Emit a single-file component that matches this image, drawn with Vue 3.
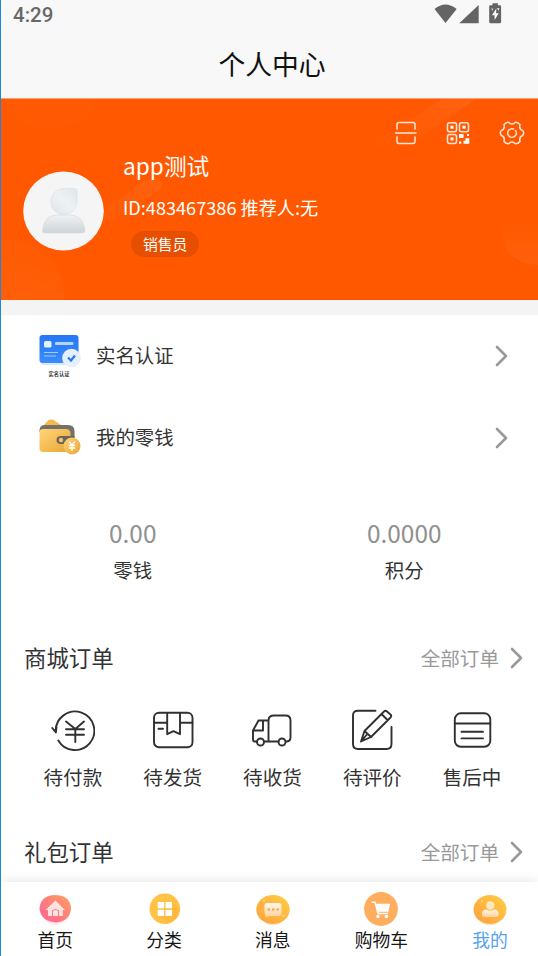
<script setup>
const orders = [
  { label: '待付款', icon: 'pay' },
  { label: '待发货', icon: 'box' },
  { label: '待收货', icon: 'truck' },
  { label: '待评价', icon: 'edit' },
  { label: '售后中', icon: 'after' },
]
const tabs = [
  { label: '首页', icon: 'home' },
  { label: '分类', icon: 'grid' },
  { label: '消息', icon: 'chat' },
  { label: '购物车', icon: 'cart' },
  { label: '我的', icon: 'mine', active: true },
]
</script>

<template>
  <div class="screen">
    <header class="top">
      <div class="status">
        <span class="time">4:29</span>
        <svg class="status-icons" width="70" height="24" viewBox="434 2 70 24" fill="#646464">
          <path d="M434.500 9Q445.500 0 456.700 9L445.500 23Z" />
          <path d="M478.700 5V23.300H459.200Z" />
          <path d="M492.500 3.300h5.400v2h2q1.200 0 1.200 1.200v15.600q0 1.200-1.200 1.200h-9.500q-1.200 0-1.200-1.200V6.500q0-1.200 1.200-1.200h2.100z" />
          <path d="M491.300 8.500h2l-1 2.500zM497 8h2.500l-1.200 3z" fill="#ddd" />
          <path d="M496.300 8.500l-4.300 6.800h2.600v4.700l4.100-6.700h-2.600z" fill="#fff" />
        </svg>
      </div>
      <h1 class="title">个人中心</h1>
    </header>

    <section class="hero">
      <svg class="hero-bg" width="537" height="201" viewBox="1 99 537 201">
        <defs>
          <linearGradient id="beam" x1="1" y1="0" x2="0" y2="1">
            <stop offset="0" stop-color="#fff" stop-opacity=".06" />
            <stop offset="1" stop-color="#fff" stop-opacity="0" />
          </linearGradient>
          <linearGradient id="orb" x1="0" y1="1" x2=".3" y2="0">
            <stop offset="0" stop-color="#fff" stop-opacity=".07" />
            <stop offset="1" stop-color="#fff" stop-opacity=".015" />
          </linearGradient>
          <linearGradient id="fade" x1="0" y1="0" x2="0" y2="1">
            <stop offset=".2" stop-color="#fff" stop-opacity="0" />
            <stop offset="1" stop-color="#fff" stop-opacity=".05" />
          </linearGradient>
        </defs>
        <ellipse cx="50" cy="99" rx="45" ry="29" fill="#fff" fill-opacity=".01" />
        <circle cx="8" cy="296" r="56" fill="url(#orb)" />
        <path d="M444 98H478L420 137L365 150Z" fill="url(#beam)" />
        <path d="M70 237L140 183Q154 176 161 181Q164 188 154 194L85 235Z" fill="url(#beam)" />
        <ellipse cx="538" cy="237" rx="35" ry="28" fill="url(#fade)" />
      </svg>

      <div class="tools">
        <svg width="22" height="24" viewBox="0 0 22 24" fill="none" stroke="#fff" stroke-opacity=".85" stroke-width="1.500" stroke-linecap="round">
          <path d="M2 8V3.500Q2 1.500 4 1.500H18Q20 1.500 20 3.500V8M2 16V20.500Q2 22.500 4 22.500H18Q20 22.500 20 20.500V16M.8 12H21.200" />
        </svg>
        <svg width="24" height="24" viewBox="0 0 24 24" fill="none" stroke="#fff" stroke-opacity=".85" stroke-width="1.500">
          <rect x="1.500" y="1.700" width="9" height="9" rx="2" />
          <rect x="13.500" y="1.700" width="9" height="9" rx="2" />
          <rect x="1.500" y="13.400" width="9" height="9" rx="2" />
          <g fill="#fff" stroke="none">
            <rect x="4.500" y="4.700" width="3" height="3" />
            <rect x="16.500" y="4.700" width="3" height="3" />
            <rect x="4.500" y="16.400" width="3" height="3" />
            <path d="M13 13h4.500v4H13zM21 13h2v2h-2zM13 20.500h2.200v2.300H13zM17.500 22.800v-3h2v-2.500h3.800v5.500z" />
          </g>
        </svg>
        <svg width="26" height="26" viewBox="0 0 26 26" fill="none" stroke="#fff" stroke-opacity=".85" stroke-width="1.500" stroke-linejoin="round">
          <path d="M9.500 2.200Q13 6 16.500 2.200Q19 2 21 4.500Q19.800 9.300 23.600 10.500Q25.800 13 23.600 15.500Q19.800 16.700 21 21.500Q19 24 16.500 23.800Q13 20 9.500 23.800Q7 24 5 21.500Q6.200 16.700 2.400 15.500Q.2 13 2.400 10.500Q6.200 9.300 5 4.500Q7 2 9.500 2.200Z" />
          <path d="M10.300 9.700A4.300 4.300 0 1 0 16.500 10.500M11.500 9A4.300 4.300 0 0 1 14.500 9" stroke-linecap="round" />
        </svg>
      </div>

      <div class="profile">
        <svg class="avatar" width="81" height="80" viewBox="0 0 81 80">
          <defs>
            <linearGradient id="head" x1="1" y1="0" x2="0" y2="1">
              <stop offset="0" stop-color="#dfe7eb" />
              <stop offset=".5" stop-color="#eef2f4" />
              <stop offset="1" stop-color="#dce3e8" />
            </linearGradient>
            <linearGradient id="torso" x1="0" y1="0" x2="0" y2="1">
              <stop offset="0" stop-color="#f0f3f5" />
              <stop offset="1" stop-color="#cdd3d7" />
            </linearGradient>
          </defs>
          <ellipse cx="40.500" cy="40" rx="40.300" ry="39.500" fill="#f5f5f5" />
          <path d="M40 17.500H51Q54 17.500 54 20.500V29A13.200 13 0 1 1 40 17.500Z" fill="url(#head)" stroke="#dae1e5" stroke-width=".7" />
          <path d="M19.500 60Q21 44 34 44H47Q60 44 62 59Q62 62 59 62H22Q19.500 62 19.500 60Z" fill="url(#torso)" stroke="#d7dbde" stroke-width=".7" />
        </svg>
        <div class="info">
          <div class="name">app测试</div>
          <div class="uid">ID:483467386 推荐人:无</div>
          <span class="role">销售员</span>
        </div>
      </div>
    </section>

    <div class="divider"></div>

    <main class="content">
      <div class="row">
        <svg class="row-icon" width="44" height="44" viewBox="0 0 44 44">
          <defs>
            <linearGradient id="card" x1="0" y1="0" x2="0" y2="1">
              <stop offset="0" stop-color="#2577f5" />
              <stop offset="1" stop-color="#3a8bfc" />
            </linearGradient>
          </defs>
          <rect x="2.500" y="3" width="38" height="28" rx="3" fill="#d8e7fc" />
          <rect x="1.500" y="1" width="39" height="28" rx="3" fill="url(#card)" />
          <rect x="6" y="7" width="7.500" height="6.500" rx="1.500" fill="#e5efff" />
          <rect x="17" y="8" width="18.500" height="3" rx="1" fill="#b7d2fc" />
          <path d="M6 18.500H20M6 22H18" stroke="#a5c7fc" stroke-width="1.200" />
          <circle cx="33.500" cy="24" r="9.300" fill="#e5efff" />
          <path d="M30 23.500l3 3 4-5" fill="none" stroke="#287bf0" stroke-width="2.200" />
          <text x="21" y="41.500" class="tiny" text-anchor="middle">实名认证</text>
        </svg>
        <span class="row-label">实名认证</span>
        <svg class="chevron" width="14" height="22" viewBox="0 0 14 22"><path d="M2 2L11 11L2 20" /></svg>
      </div>
      <div class="row">
        <svg class="row-icon" width="44" height="44" viewBox="0 0 44 44">
          <defs>
            <linearGradient id="gold" x1="0" y1="0" x2="1" y2="1">
              <stop offset="0" stop-color="#ffd57a" />
              <stop offset="1" stop-color="#e9a632" />
            </linearGradient>
          </defs>
          <path d="M6 9L10 4.500Q14 2.500 17 5L23 9V13H5Z" fill="#f3ba4b" />
          <path d="M1.500 14Q2 9 7 9H30Q36.500 9 36.500 15V31H29V16H1.500Z" fill="#74706a" />
          <path d="M1.500 15.500Q2 13 5 13H28Q32.500 13 32.500 17.500V32Q32.500 36 28 36H5Q1.500 36 1.500 32Z" fill="url(#gold)" />
          <path d="M36.500 20H23Q18.500 20 18.500 24T23 28H36.500Z" fill="#69655e" />
          <circle cx="23" cy="24" r="2.200" fill="#f2c465" />
          <circle cx="34" cy="30" r="8.500" fill="url(#gold)" />
          <path d="M31 25.500L34 29L37 25.500M34 29V35M30.800 29.500H37.200M30.800 32H37.200" fill="none" stroke="#fff" stroke-width="1.300" />
        </svg>
        <span class="row-label">我的零钱</span>
        <svg class="chevron" width="14" height="22" viewBox="0 0 14 22"><path d="M2 2L11 11L2 20" /></svg>
      </div>

      <div class="stats">
        <div class="stat"><b>0.00</b><span>零钱</span></div>
        <div class="stat"><b>0.0000</b><span>积分</span></div>
      </div>

      <div class="section-head">
        <h2>商城订单</h2>
        <span>全部订单</span>
        <svg class="chevron" width="14" height="22" viewBox="0 0 14 22"><path d="M2 2L11 11L2 20" /></svg>
      </div>

      <div class="orders">
        <div v-for="o in orders" :key="o.icon" class="order">
          <svg width="44" height="44" viewBox="0 0 44 44" fill="none" stroke="#303030" stroke-width="1.900" stroke-linecap="round" stroke-linejoin="round">
            <template v-if="o.icon === 'pay'">
              <path d="M4.700 22A19.300 19.300 0 1 1 7.300 31.500M1.300 19L4.900 23.400L5.500 18.200" />
              <path d="M15 12.500L24.300 20L33 12.500M24.300 20V33M15 20.300H33M15 25.700H33" />
            </template>
            <template v-else-if="o.icon === 'box'">
              <rect x="3" y="3.700" width="38.500" height="34.500" rx="5" />
              <path d="M3 13.700H16M29 13.700H41.500M16.200 4.200V25.200L22.500 22.200L29 25.200V4.200M7.500 19.700H12" />
            </template>
            <template v-else-if="o.icon === 'truck'">
              <path d="M6.500 32.500H4.500Q3 32.500 3 30.500V21.500L8.500 11.500H18.500V32.500H14M8.500 11.500H13V21.500H3M18.500 11.500Q18.500 6.500 24 6.500H35.500Q40.500 6.500 40.500 11.500V28.500Q40.500 32.500 36 32.500M28.500 32.500H18.500" />
              <circle cx="10.500" cy="33" r="3.500" /><circle cx="32" cy="33" r="3.500" />
            </template>
            <template v-else-if="o.icon === 'edit'">
              <path d="M25.500 1.700H8Q3 1.700 3 6.700V35Q3 40 8 40H36.500Q41.500 40 41.500 35V18" />
              <path d="M11 32.500L14.500 22L34 2.500Q35.500 1.200 37 2.500L40.500 5.500Q42 7 40.500 8.500L21 28ZM14.500 22L21 28M31.500 5L37.500 11M11 32.500L16.500 26" />
            </template>
            <template v-else>
              <rect x="4.800" y="4.300" width="35.500" height="33.500" rx="6" />
              <path d="M4.800 14.500H40.300M11.500 22.700H33M11.500 29.400H33" />
            </template>
          </svg>
          <span>{{ o.label }}</span>
        </div>
      </div>

      <div class="section-head">
        <h2>礼包订单</h2>
        <span>全部订单</span>
        <svg class="chevron" width="14" height="22" viewBox="0 0 14 22"><path d="M2 2L11 11L2 20" /></svg>
      </div>
    </main>

    <nav class="tabbar">
      <div v-for="t in tabs" :key="t.icon" class="tab" :class="{ active: t.active }">
        <svg width="36" height="36" viewBox="0 0 36 36">
          <defs>
            <linearGradient id="pink" x1="1" y1="0" x2="0" y2="1">
              <stop offset="0" stop-color="#ffa05f" /><stop offset="1" stop-color="#ff5e98" />
            </linearGradient>
            <linearGradient id="yellow" x1="1" y1="0" x2="0" y2="1">
              <stop offset="0" stop-color="#ffcf44" /><stop offset="1" stop-color="#ff9f3d" />
            </linearGradient>
            <linearGradient id="white" x1="0" y1="0" x2="0" y2="1">
              <stop offset="0" stop-color="#fff7ec" /><stop offset="1" stop-color="#ffd29a" />
            </linearGradient>
          </defs>
          <template v-if="t.icon === 'home'">
            <ellipse cx="18.300" cy="20.500" rx="13" ry="13.500" fill="#ffb9c9" opacity=".35" />
            <path d="M2.500 18Q3 5 17 4Q33 4 34 17Q33.500 30 19 31.500Q4 30 2.500 18Z" fill="url(#pink)" />
            <path d="M8.500 19L18.500 9.500L28 19H25.800V25H11V19Z" fill="#ffe3df" />
            <path d="M15.500 25V20Q18.500 17 21.500 20V25" fill="none" stroke="#f77f8d" stroke-width="1.100" />
            <circle cx="10" cy="9.500" r="1" fill="#f18067" />
          </template>
          <template v-else-if="t.icon === 'grid'">
            <circle cx="18.800" cy="17.700" r="15.300" fill="#ffc247" />
            <path d="M25.500 11L32.500 18Q33 28 21.500 32.500L12.500 24Z" fill="#ffb335" opacity=".6" />
            <g fill="#fff"><rect x="11.700" y="11" width="6.500" height="6.300" rx=".5" /><rect x="19.500" y="11" width="6.500" height="6.300" rx=".5" /><rect x="11.700" y="18.700" width="6.500" height="6.300" rx=".5" /><rect x="19.500" y="18.700" width="6.500" height="6.300" rx=".5" /></g>
          </template>
          <template v-else-if="t.icon === 'chat'">
            <ellipse cx="18" cy="21.500" rx="13" ry="13" fill="#ffd3a0" opacity=".45" />
            <ellipse cx="18" cy="18.500" rx="16.700" ry="14.500" fill="url(#yellow)" />
            <path d="M12 12H24Q26.500 12 26.500 15V22Q26.500 25 24 25H14L11 26.500L10 24Q9.500 22 9.500 20V15Q9.500 12 12 12Z" fill="url(#white)" />
            <path d="M12.500 18.500h2.500M17 18.500h2.500M21.500 18.500h2.500" stroke="#f8a13e" stroke-width="1.800" />
            <circle cx="9" cy="10" r="1" fill="#ffdf82" /><circle cx="28.500" cy="25" r="1.100" fill="#ffdf82" />
          </template>
          <template v-else-if="t.icon === 'cart'">
            <circle cx="18" cy="18" r="16.900" fill="#ffae60" />
            <path d="M8.800 11.200H12L15 22.500H25" fill="none" stroke="#fff" stroke-width="1.400" />
            <path d="M12.600 12.800H27L25.500 20.800H14.600Z" fill="#fff" />
            <circle cx="15" cy="25.500" r="1.700" fill="#fff" /><circle cx="23.500" cy="25.500" r="1.700" fill="#fff" />
          </template>
          <template v-else>
            <ellipse cx="18" cy="21.500" rx="13" ry="13" fill="#ffd3a0" opacity=".45" />
            <ellipse cx="18" cy="18.500" rx="16.500" ry="14.500" fill="url(#yellow)" />
            <circle cx="18.300" cy="14.500" r="4.300" fill="#ffe6bd" />
            <path d="M9.800 23.500Q10 18.500 14.500 18.500Q18 21 22 18.500Q26.500 18.500 26.800 23.500Q26.800 26 24.500 26H12Q9.800 26 9.800 23.500Z" fill="url(#white)" />
            <circle cx="10" cy="10" r="1" fill="#ffdf82" />
          </template>
        </svg>
        <span>{{ t.label }}</span>
      </div>
    </nav>
  </div>
</template>

<style>
body {
  margin: 0;
  overflow: hidden;
}
</style>

<style scoped>
.screen {
  box-sizing: border-box;
  width: 538px;
  height: 956px;
  display: flex;
  flex-direction: column;
  overflow: hidden;
  border-left: 1px solid #1f86e0;
  background: #fff;
  color: #333;
  font-family: "Noto Sans CJK SC", sans-serif;
}
svg {
  display: block;
  flex: none;
}
.top {
  flex: none;
  height: 98px;
  background: #f8f8f8;
  border-bottom: 1px solid #fca26f;
  box-sizing: content-box;
}
.status {
  display: flex;
  justify-content: space-between;
  height: 30px;
  padding: 0 34px 0 12px;
}
.time {
  color: #686868;
  font: 500 20.500px/30px Roboto, sans-serif;
}
.status-icons {
  margin-top: 2px;
}
.title {
  margin: 0;
  padding-left: 5px;
  color: #111;
  font-size: 26.800px;
  font-weight: 400;
  line-height: 68px;
  text-align: center;
}
.hero {
  position: relative;
  flex: none;
  height: 201px;
  background: #ff5800;
  color: #fff;
}
.hero-bg {
  position: absolute;
  inset: 0;
}
.tools {
  position: relative;
  display: flex;
  align-items: center;
  justify-content: flex-end;
  gap: 29px;
  height: 26px;
  padding: 21px 13px 0 0;
}
.profile {
  position: relative;
  display: flex;
  gap: 19px;
  padding-left: 22px;
}
.avatar {
  margin-top: 25px;
}
.info {
  display: flex;
  flex-direction: column;
  align-items: flex-start;
  padding-top: 3px;
}
.name {
  font-size: 22.700px;
  line-height: 34px;
}
.uid {
  margin-top: 11px;
  font-size: 18.150px;
  line-height: 26px;
}
.role {
  margin: 11px 0 0 8px;
  padding: 0 12px;
  border-radius: 14px;
  background: #e64f00;
  font-size: 14.800px;
  line-height: 26px;
}
.divider {
  flex: none;
  height: 15px;
  background: #f4f4f4;
}
.content {
  flex: 1;
  min-height: 0;
}
.row {
  display: flex;
  align-items: center;
  height: 82px;
  padding: 0 29px 0 37px;
}
.row-label {
  flex: 1;
  margin-left: 14px;
  padding-bottom: 3px;
  font-size: 19.400px;
}
.tiny {
  font-size: 5.200px;
  font-weight: 700;
  fill: #333;
}
.chevron {
  fill: none;
  stroke: #999;
  stroke-width: 2.600;
  stroke-linecap: round;
  stroke-linejoin: round;
}
.stats {
  display: flex;
  height: 148px;
  padding: 36px 0 0;
  box-sizing: border-box;
}
.stat {
  display: flex;
  flex: none;
  width: 271.500px;
  flex-direction: column;
  align-items: center;
  margin-left: -4px;
  margin-right: 4px;
}
.stat b {
  color: #8f8f8f;
  font-size: 24.400px;
  font-weight: 400;
  line-height: 36px;
}
.stat span {
  font-size: 19.400px;
  line-height: 37px;
}
.section-head {
  display: flex;
  align-items: center;
  height: 62px;
  padding: 0 14px 0 23px;
}
.section-head h2 {
  flex: 1;
  margin: 0;
  padding-bottom: 2px;
  font-size: 22.400px;
  font-weight: 400;
}
.section-head span {
  margin-right: 11px;
  padding-bottom: 2px;
  color: #999;
  font-size: 19.600px;
}
.orders {
  display: flex;
  height: 132px;
  padding: 20px 16px 0 22px;
  box-sizing: border-box;
}
.order {
  display: flex;
  flex: 1;
  flex-direction: column;
  align-items: center;
}
.order span {
  margin-top: 8px;
  font-size: 19.600px;
  line-height: 32px;
}
.tabbar {
  position: relative;
  display: flex;
  flex: none;
  height: 74px;
  background: #fff;
  box-shadow: 0 -1px 10px rgba(0, 0, 0, 0.1);
}
.tab {
  display: flex;
  flex: none;
  width: 108.700px;
  flex-direction: column;
  align-items: center;
  padding-top: 9px;
  color: #161616;
}
.tab span {
  margin-top: -1px;
  font-size: 17.800px;
  line-height: 26px;
}
.tab.active {
  color: #55a2ef;
}
</style>
